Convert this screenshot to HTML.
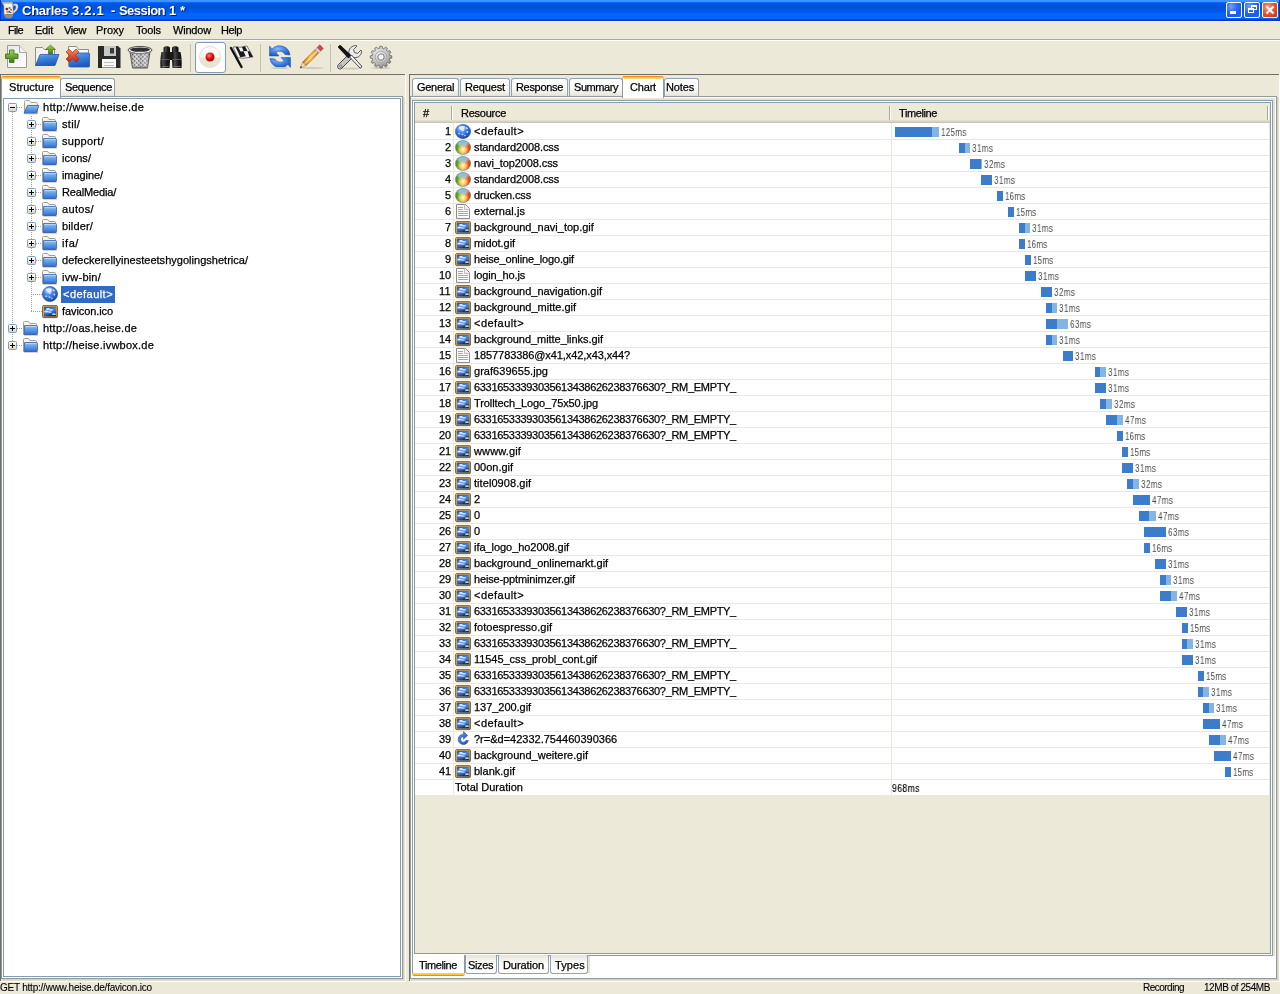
<!DOCTYPE html><html><head><meta charset="utf-8"><style>
*{box-sizing:border-box;margin:0;padding:0}
html,body{width:1280px;height:994px;overflow:hidden;background:#ece9d8;font-family:"Liberation Sans",sans-serif;font-size:11px;color:#000;position:relative}
.a{position:absolute}
.t{position:absolute;white-space:nowrap;line-height:16px;will-change:transform;-webkit-text-stroke:0.25px currentColor}
svg{position:absolute;overflow:visible}
</style></head><body>
<div class="a" style="left:0;top:0;width:1280px;height:21px;background:linear-gradient(#3f97ff 0px,#3f97ff 1px,#3990ff 1px,#3990ff 2px,#0a66f4 2px,#0a66f4 3px,#0058e8 3px,#0058e8 4px,#0055e2 4px,#0055e2 5px,#0053dd 5px,#0053dd 6px,#0052dc 6px,#0052dc 7px,#0052dc 7px,#0052dc 8px,#0053dd 8px,#0053dd 9px,#0056e4 9px,#0056e4 10px,#0058e8 10px,#0058e8 11px,#0059ea 11px,#0059ea 12px,#005cee 12px,#005cee 13px,#0064f8 13px,#0064f8 14px,#0066fb 14px,#0066fb 15px,#0066fb 15px,#0066fb 16px,#0066fb 16px,#0066fb 17px,#0066fb 17px,#0066fb 18px,#0062f6 18px,#0062f6 19px,#0046d8 19px,#0046d8 20px,#0032c4 20px,#0032c4 21px)"></div>
<div class="a" style="left:0px;top:0px;width:1px;height:21px;background:#0030b0;"></div>
<div class="a" style="left:1279px;top:0px;width:1px;height:21px;background:#0030b0;"></div>
<div class="t" style="left:23px;top:4px;font-size:13px;letter-spacing:-0.24px;color:#0a1a6a;font-weight:bold;margin-left:0.0px;-webkit-text-stroke:0;">Charles</div>
<div class="t" style="left:22px;top:3px;font-size:13px;letter-spacing:-0.24px;color:#fff;font-weight:bold;margin-left:0.0px;-webkit-text-stroke:0;">Charles</div>
<div class="t" style="left:73px;top:4px;font-size:13px;letter-spacing:0.72px;color:#0a1a6a;font-weight:bold;margin-left:0.0px;-webkit-text-stroke:0;">3.2.1</div>
<div class="t" style="left:72px;top:3px;font-size:13px;letter-spacing:0.72px;color:#fff;font-weight:bold;margin-left:0.0px;-webkit-text-stroke:0;">3.2.1</div>
<div class="t" style="left:112px;top:4px;font-size:13px;letter-spacing:1.67px;color:#0a1a6a;font-weight:bold;margin-left:0.0px;-webkit-text-stroke:0;">-</div>
<div class="t" style="left:111px;top:3px;font-size:13px;letter-spacing:1.67px;color:#fff;font-weight:bold;margin-left:0.0px;-webkit-text-stroke:0;">-</div>
<div class="t" style="left:119px;top:4px;font-size:13px;letter-spacing:-0.55px;color:#0a1a6a;font-weight:bold;margin-left:0.5px;-webkit-text-stroke:0;">Session</div>
<div class="t" style="left:118px;top:3px;font-size:13px;letter-spacing:-0.55px;color:#fff;font-weight:bold;margin-left:0.5px;-webkit-text-stroke:0;">Session</div>
<div class="t" style="left:170px;top:4px;font-size:13px;letter-spacing:-0.23px;color:#0a1a6a;font-weight:bold;margin-left:0.0px;-webkit-text-stroke:0;">1</div>
<div class="t" style="left:169px;top:3px;font-size:13px;letter-spacing:-0.23px;color:#fff;font-weight:bold;margin-left:0.0px;-webkit-text-stroke:0;">1</div>
<div class="t" style="left:180px;top:4px;font-size:13px;letter-spacing:1.94px;color:#0a1a6a;font-weight:bold;margin-left:0.5px;-webkit-text-stroke:0;">*</div>
<div class="t" style="left:179px;top:3px;font-size:13px;letter-spacing:1.94px;color:#fff;font-weight:bold;margin-left:0.5px;-webkit-text-stroke:0;">*</div>
<svg style="left:0;top:0" width="24" height="21" viewBox="0 0 24 21">
<path d="M13 4.5 C16.5 2.5 18.5 4.5 18 7.5 C17.5 10.5 15 12.5 12.5 13.5 L12.5 11.5 C14.5 10.5 16 9 16 7 C16 5.5 14.5 5 13 6 Z" fill="#f0ece0" stroke="#a09888" stroke-width="0.6"/>
<path d="M2 2.5 L12.5 2.5 L12.5 4 C13 6 13 9 13 12 C13 16 11.5 18 8.5 18 C5.5 18 4 16 4 12 L4 6 C3.5 4.5 2.5 3.5 2 2.5 Z" fill="#f4f2ea" stroke="#a8a090" stroke-width="0.6"/>
<rect x="3" y="2.5" width="9.5" height="1.5" fill="#b8c4c8"/>
<path d="M4 14 C4 17 5.5 18 8.5 18 C11.5 18 13 17 13 14 Z" fill="#988878"/>
<circle cx="6.8" cy="9" r="1.3" fill="#503030"/><circle cx="9.5" cy="8" r="1.1" fill="#e83838"/><circle cx="11" cy="9.8" r="1" fill="#38a838"/><circle cx="7.5" cy="12" r="1.4" fill="#f0a000"/><circle cx="9.3" cy="11.8" r="1" fill="#2858d0"/><circle cx="10.8" cy="12.5" r="0.8" fill="#7040a0"/>
</svg>
<div class="a" style="left:1226px;top:2px;width:16px;height:16px;border:1px solid #fff;border-radius:2px;background:radial-gradient(circle at 30% 25%,#6fa0ff 0,#2d6cf0 40%,#1a58e8 70%,#2a70f8 100%)"></div><div class="a" style="left:1230px;top:11px;width:6px;height:3px;background:#fff;"></div>
<div class="a" style="left:1244px;top:2px;width:16px;height:16px;border:1px solid #fff;border-radius:2px;background:radial-gradient(circle at 30% 25%,#6fa0ff 0,#2d6cf0 40%,#1a58e8 70%,#2a70f8 100%)"></div><div class="a" style="left:1251px;top:5px;width:6px;height:5px;border:1px solid #fff;border-top-width:2px"></div><div class="a" style="left:1248px;top:8px;width:6px;height:5px;border:1px solid #fff;border-top-width:2px;background:#2a66ee"></div>
<div class="a" style="left:1262px;top:2px;width:16px;height:16px;border:1px solid #fff;border-radius:2px;background:radial-gradient(circle at 35% 30%,#f4a080 0,#e8603c 40%,#d4441c 75%,#b83410 100%)"></div><svg style="left:1262px;top:2px" width="16" height="16" viewBox="0 0 16 16"><path d="M4.5 4.5 L11.5 11.5 M11.5 4.5 L4.5 11.5" stroke="#fff" stroke-width="2.2"/></svg>
<div class="a" style="left:0px;top:21px;width:1280px;height:1px;background:#fbf5de;"></div>
<div class="t" style="left:8px;top:22px;letter-spacing:-0.68px;">File</div>
<div class="t" style="left:35px;top:22px;letter-spacing:-0.24px;">Edit</div>
<div class="t" style="left:64px;top:22px;letter-spacing:-0.41px;">View</div>
<div class="t" style="left:96px;top:22px;letter-spacing:-0.02px;">Proxy</div>
<div class="t" style="left:136px;top:22px;letter-spacing:-0.14px;">Tools</div>
<div class="t" style="left:173px;top:22px;letter-spacing:-0.19px;">Window</div>
<div class="t" style="left:221px;top:22px;letter-spacing:-0.41px;">Help</div>
<div class="a" style="left:0px;top:39px;width:1280px;height:1px;background:#aca899;"></div>
<div class="a" style="left:0px;top:40px;width:1280px;height:1px;background:#fff;"></div>
<svg style="left:0;top:41px" width="400" height="33" viewBox="0 41 400 33">
<defs>
<linearGradient id="gGreen" x1="0" y1="0" x2="0" y2="1"><stop offset="0" stop-color="#a8d070"/><stop offset="0.5" stop-color="#6aa832"/><stop offset="1" stop-color="#3e7a14"/></linearGradient>
<linearGradient id="gBlueF" x1="0" y1="0" x2="0.3" y2="1"><stop offset="0" stop-color="#8cc0f4"/><stop offset="0.25" stop-color="#4a90e2"/><stop offset="1" stop-color="#1c5cc0"/></linearGradient>
<linearGradient id="gPage" x1="0" y1="0" x2="1" y2="1"><stop offset="0" stop-color="#e8e8e8"/><stop offset="1" stop-color="#ffffff"/></linearGradient>
<linearGradient id="gRed" x1="0" y1="0" x2="0" y2="1"><stop offset="0" stop-color="#f48860"/><stop offset="1" stop-color="#c82808"/></linearGradient>
<radialGradient id="gRefresh" cx="0.4" cy="0.3" r="0.8"><stop offset="0" stop-color="#8ab8f8"/><stop offset="0.5" stop-color="#3a7ee0"/><stop offset="1" stop-color="#1a4cb0"/></radialGradient>
<radialGradient id="gGear" cx="0.4" cy="0.35" r="0.7"><stop offset="0" stop-color="#f0f0f0"/><stop offset="0.6" stop-color="#c0c0c0"/><stop offset="1" stop-color="#808080"/></radialGradient>
<radialGradient id="gRec" cx="0.4" cy="0.35" r="0.7"><stop offset="0" stop-color="#ff8080"/><stop offset="0.5" stop-color="#e01010"/><stop offset="1" stop-color="#a00000"/></radialGradient>
<linearGradient id="gPencil" x1="0" y1="0" x2="1" y2="0"><stop offset="0" stop-color="#c86a10"/><stop offset="0.5" stop-color="#f8c050"/><stop offset="1" stop-color="#d88020"/></linearGradient>
</defs>
<!-- new -->
<path d="M7.5 45.5 L19.5 45.5 L26.5 52.5 L26.5 67.5 L7.5 67.5 Z" fill="url(#gPage)" stroke="#9a9a9a"/>
<path d="M19.5 45.5 L19.5 52.5 L26.5 52.5" fill="#f0f0f0" stroke="#a8a8a8"/>
<path d="M9.5 50 L14 50 L14 54 L18 54 L18 58.5 L14 58.5 L14 62.5 L9.5 62.5 L9.5 58.5 L5.5 58.5 L5.5 54 L9.5 54 Z" fill="url(#gGreen)" stroke="#3a6a10" stroke-width="0.8"/>
<!-- open -->
<path d="M35.5 47.5 L42.5 47.5 L44.5 49.5 L54.5 49.5 L54.5 65.5 L35.5 65.5 Z" fill="#f4f2ec" stroke="#909090"/>
<path d="M40 54.5 L59 54.5 L55 65.5 L35.5 65.5 Z" fill="url(#gBlueF)" stroke="#2458b0" stroke-width="0.8"/>
<path d="M50.5 45 L55.5 49.5 L52.5 49.5 L52.5 54 L48.5 54 L48.5 49.5 L45.5 49.5 Z" fill="url(#gGreen)" stroke="#3a6a10" stroke-width="0.6"/>
<!-- close -->
<path d="M68.5 46.5 L76.5 46.5 L78.5 49.5 L88.5 49.5 L88.5 66.5 L68.5 66.5 Z" fill="#f8f8f4" stroke="#909090"/>
<rect x="69.5" y="53" width="20" height="14" rx="1" fill="url(#gBlueF)" stroke="#2458b0" stroke-width="0.8"/>
<path d="M66 52 L69 49 L72.5 52.5 L76 49 L79 52 L75.5 55.5 L79 59 L76 62 L72.5 58.5 L69 62 L66 59 L69.5 55.5 Z" fill="url(#gRed)" stroke="#b01800" stroke-width="0.6"/>
<!-- save -->
<path d="M98 46 L118 46 L120.5 48.5 L120.5 68 L98 68 Z" fill="#2a2a2a"/>
<rect x="104" y="46" width="12" height="10" fill="#c8c8c4"/>
<rect x="110" y="48" width="4" height="5.5" fill="#3a3a3a"/>
<rect x="102" y="59" width="14" height="8.5" fill="#f8f8f4"/>
<rect x="104" y="62" width="10" height="0.8" fill="#a0b0c0"/><rect x="104" y="65" width="10" height="0.8" fill="#a0b0c0"/>
<!-- trash -->
<pattern id="mesh" x="0" y="0" width="2.9" height="2.9" patternUnits="userSpaceOnUse" patternTransform="rotate(45 140 60)"><rect width="2.9" height="2.9" fill="#d0d0d0"/><rect x="0" y="0" width="1.6" height="1.6" fill="#303030"/><path d="M0 1.6 L3.2 1.6 M1.6 0 L1.6 3.2" stroke="#f4f4f4" stroke-width="0.5"/></pattern>
<linearGradient id="trshade" x1="0" y1="0" x2="1" y2="0"><stop offset="0" stop-color="#000" stop-opacity="0.35"/><stop offset="0.35" stop-color="#fff" stop-opacity="0.1"/><stop offset="0.5" stop-color="#000" stop-opacity="0.1"/><stop offset="0.75" stop-color="#fff" stop-opacity="0.15"/><stop offset="1" stop-color="#000" stop-opacity="0.4"/></linearGradient>
<path d="M130 52 L150 52 L147.5 68 L132.5 68 Z" fill="url(#mesh)" stroke="#505050" stroke-width="0.8"/>
<path d="M130 52 L150 52 L147.5 68 L132.5 68 Z" fill="url(#trshade)"/>
<path d="M132.5 67.5 L147.5 67.5" stroke="#707070" stroke-width="1.5"/>
<ellipse cx="140" cy="50" rx="12" ry="3.6" fill="#e8e8e8" stroke="#404040" stroke-width="0.9"/>
<ellipse cx="140" cy="49.6" rx="10" ry="2.2" fill="#303030"/>
<path d="M129 51.5 C133 54.5 147 54.5 151 51.5" stroke="#909090" stroke-width="1.2" fill="none"/>
<!-- binoculars -->
<linearGradient id="bin" x1="0" y1="0" x2="1" y2="0"><stop offset="0" stop-color="#101010"/><stop offset="0.3" stop-color="#4a4a4a"/><stop offset="0.6" stop-color="#202020"/><stop offset="1" stop-color="#0a0a0a"/></linearGradient>
<path d="M163.5 52 L163.5 48 C163.5 45.5 170 45.5 170 48 L170 52 Z" fill="url(#bin)"/>
<path d="M172 52 L172 48 C172 45.5 178.5 45.5 178.5 48 L178.5 52 Z" fill="url(#bin)"/>
<path d="M161.5 52 L170 52 L170 60 L169.5 68 L160.5 68 C160 64 160.5 56 161.5 52 Z" fill="url(#bin)"/>
<path d="M172 52 L180.5 52 C181.5 56 182 64 181.5 68 L172.5 68 L172 60 Z" fill="url(#bin)"/>
<rect x="168.5" y="52" width="5" height="8" fill="#181818"/>
<path d="M161 59.5 L169.5 59.5 M172.5 59.5 L181 59.5" stroke="#6a6a6a" stroke-width="0.8"/>
<path d="M162 66.5 L168.5 66.5 M173.5 66.5 L180.5 66.5" stroke="#808080" stroke-width="0.8"/>
<!-- separators -->
<rect x="190" y="44" width="1" height="28" fill="#c5c2b2"/>
<rect x="260" y="44" width="1" height="28" fill="#c5c2b2"/>
<rect x="330" y="44" width="1" height="28" fill="#c5c2b2"/>
<!-- record button -->
<rect x="195.5" y="42.5" width="30" height="30" rx="2.5" fill="#fdfdfb" stroke="#7f9db9"/>
<circle cx="210" cy="57" r="10.5" fill="#fafaf8" stroke="#ddd8cc" stroke-width="0.8"/>
<path d="M199.5 57.5 A10.5 10.5 0 0 0 220.5 57.5 Z" fill="#e8e4d6"/>
<circle cx="210" cy="57" r="4.5" fill="url(#gRec)"/>
<!-- flag -->
<path d="M231 48 L241.5 67" stroke="#101010" stroke-width="2.4" stroke-linecap="round"/>
<path d="M233 47 C236 46 239 48 242 47 C245 46 247 46 247 46 L253 57 C250 57 248 58 245 58 C242 59 240 57 238 58 Z" fill="#f4f4f4" stroke="#303030" stroke-width="0.6"/>
<path d="M235.5 47 L238 46.8 L240.5 51.5 L238 52 Z M240.5 51.5 L243.5 51.2 L245.8 56.2 L243 56.8 Z M242 47 L245 46.2 L247.5 51 L243.5 51.2 Z M238 52 L240.5 51.5 L243 56.8 L240.3 57.3 Z M247.5 51 L250 51.5 L252.8 56.8 L249.5 57.2 Z" fill="#1a1a1a"/>
<!-- refresh -->
<path d="M290 55 A10.5 10.5 0 0 0 272 49 L269.5 46 L269.5 56 L279 56 L276 52.5 A6 6 0 0 1 285 54.5 Z" fill="url(#gRefresh)" stroke="#1a4aa8" stroke-width="0.5"/>
<path d="M270 58.5 A10.5 10.5 0 0 0 288 64.5 L290.5 67.5 L290.5 57.5 L281 57.5 L284 61 A6 6 0 0 1 275 59 Z" fill="url(#gRefresh)" stroke="#1a4aa8" stroke-width="0.5"/>
<ellipse cx="280" cy="68" rx="9" ry="1" fill="#d0ccbc"/>
<!-- pencil -->
<ellipse cx="312" cy="68" rx="12" ry="0.9" fill="#cfcbbb"/>
<path d="M306.01 65.73 L318.74 53.00 L315.20 49.46 L302.47 62.19 Z" fill="url(#gPencil)" stroke="#a85808" stroke-width="0.6"/>
<path d="M304.60 63.60 L316.97 51.23" stroke="#fce090" stroke-width="1.2"/>
<path d="M300.00 68.20 L306.01 65.73 L302.47 62.19 Z" fill="#f0d8a8" stroke="#a08050" stroke-width="0.5"/>
<path d="M300.00 68.20 L302.23 67.32 L300.88 65.97 Z" fill="#303030"/>
<path d="M318.74 53.00 L320.72 51.02 L317.18 47.48 L315.20 49.46 Z" fill="#d8d8d8" stroke="#808080" stroke-width="0.5"/>
<path d="M320.72 51.02 L323.33 48.40 L319.80 44.87 L317.18 47.48 Z" fill="#d04848" stroke="#a03030" stroke-width="0.5"/>
<!-- tools -->
<ellipse cx="350" cy="68.5" rx="11" ry="0.9" fill="#cfcbbb"/>
<path d="M338.5 68.5 C337 67 337.5 65.5 338.5 64.5 L350 53 L353.5 56.5 L342 68 C341 69 339.5 69.5 338.5 68.5 Z" fill="#c4c4c4" stroke="#3a3a3a" stroke-width="0.9"/>
<circle cx="340.8" cy="66.2" r="1.1" fill="#fff" stroke="#3a3a3a" stroke-width="0.6"/>
<path d="M349.5 55.5 C347.5 51 350 46 355.5 45.5 L357 46 L353.5 49.5 L354.5 52.5 L357.5 53.5 L361 50 L361.5 51.5 C361.5 56 357 58.5 352.5 57.5 Z" fill="#ececec" stroke="#4a4a4a" stroke-width="0.9"/>
<path d="M338.5 47.5 C338 46.5 339.5 45 340.5 45.5 L351 55.5 L348.5 58 Z" fill="#121212" stroke="#000" stroke-width="0.8"/>
<path d="M349.5 57 L351.5 55 L361.5 66 C362 67 361 68.5 360 68 Z" fill="#fafafa" stroke="#2a2a2a" stroke-width="0.9"/>
<!-- gear -->
<ellipse cx="381" cy="68" rx="10" ry="1.2" fill="#d0ccbc"/>
<g transform="translate(381 57)">
<path d="M-1.64 -8.44 L-1.13 -10.74 L1.13 -10.74 L1.64 -8.44 L2.80 -8.13 L4.39 -9.87 L6.35 -8.74 L5.64 -6.49 L6.49 -5.64 L8.74 -6.35 L9.87 -4.39 L8.13 -2.80 L8.44 -1.64 L10.74 -1.13 L10.74 1.13 L8.44 1.64 L8.13 2.80 L9.87 4.39 L8.74 6.35 L6.49 5.64 L5.64 6.49 L6.35 8.74 L4.39 9.87 L2.80 8.13 L1.64 8.44 L1.13 10.74 L-1.13 10.74 L-1.64 8.44 L-2.80 8.13 L-4.39 9.87 L-6.35 8.74 L-5.64 6.49 L-6.49 5.64 L-8.74 6.35 L-9.87 4.39 L-8.13 2.80 L-8.44 1.64 L-10.74 1.13 L-10.74 -1.13 L-8.44 -1.64 L-8.13 -2.80 L-9.87 -4.39 L-8.74 -6.35 L-6.49 -5.64 L-5.64 -6.49 L-6.35 -8.74 L-4.39 -9.87 L-2.80 -8.13 Z" fill="url(#gGear)" stroke="#6a6a6a" stroke-width="0.8"/>
<circle cx="0" cy="0" r="5.8" fill="none" stroke="#a8a8a8" stroke-width="1"/>
<circle cx="0" cy="0" r="3.2" fill="#f4f4f0" stroke="#707070" stroke-width="0.9"/>
</g>
</svg>
<svg width="0" height="0" style="left:0;top:0;position:absolute">
<defs>
<linearGradient id="fBlue" x1="0" y1="0" x2="0" y2="1"><stop offset="0" stop-color="#9cc4f4"/><stop offset="0.35" stop-color="#6aa4e8"/><stop offset="0.85" stop-color="#3e7cd8"/><stop offset="1" stop-color="#2a5cc0"/></linearGradient>
<linearGradient id="fBack" x1="0" y1="0" x2="0" y2="1"><stop offset="0" stop-color="#fbfaf4"/><stop offset="1" stop-color="#dcd6c0"/></linearGradient>
<radialGradient id="glob" cx="0.4" cy="0.3" r="0.75"><stop offset="0" stop-color="#a8d0ff"/><stop offset="0.45" stop-color="#3c7ee0"/><stop offset="1" stop-color="#1444a8"/></radialGradient>
<radialGradient id="cssY" cx="0.5" cy="0.62" r="0.5"><stop offset="0" stop-color="#fff4c0"/><stop offset="0.5" stop-color="#f8c040" stop-opacity="0.8"/><stop offset="1" stop-color="#f8c040" stop-opacity="0"/></radialGradient>
<linearGradient id="imgSky" x1="0" y1="0" x2="0.4" y2="1"><stop offset="0" stop-color="#1a50b8"/><stop offset="0.5" stop-color="#4a8ae0"/><stop offset="0.75" stop-color="#2a68c8"/><stop offset="1" stop-color="#0a2a80"/></linearGradient><linearGradient id="cssLR" x1="0" y1="0" x2="1" y2="0"><stop offset="0" stop-color="#3a9018"/><stop offset="0.3" stop-color="#80b840"/><stop offset="0.5" stop-color="#e8d090"/><stop offset="0.7" stop-color="#f07040"/><stop offset="1" stop-color="#d83000"/></linearGradient><radialGradient id="cssTop" cx="0.5" cy="0.05" r="0.5"><stop offset="0" stop-color="#78c0e0"/><stop offset="0.6" stop-color="#90c8e0" stop-opacity="0.9"/><stop offset="1" stop-color="#90c8e0" stop-opacity="0"/></radialGradient><radialGradient id="cssBot" cx="0.5" cy="0.65" r="0.4"><stop offset="0" stop-color="#fffce8"/><stop offset="0.5" stop-color="#f8d870" stop-opacity="0.8"/><stop offset="1" stop-color="#f0b040" stop-opacity="0"/></radialGradient>
<linearGradient id="frame" x1="0" y1="0" x2="1" y2="1"><stop offset="0" stop-color="#d8a048"/><stop offset="0.5" stop-color="#c08030"/><stop offset="1" stop-color="#9a5a18"/></linearGradient>
<linearGradient id="boxG" x1="0" y1="0" x2="0" y2="1"><stop offset="0" stop-color="#ffffff"/><stop offset="1" stop-color="#d8d4c4"/></linearGradient>
<symbol id="i-fold" viewBox="0 0 16 16">
<rect x="1" y="14.6" width="14" height="1.2" fill="#cdc9bc"/>
<path d="M0.5 14.5 L0.5 2.5 Q0.5 1.5 1.5 1.5 L5.5 1.5 L7 3.5 L12.5 3.5 Q13.5 3.5 13.5 4.5 L13.5 14.5 Z" fill="url(#fBack)" stroke="#a09c90"/>
<path d="M1.5 5.5 L13.5 5.5 Q14.5 5.5 14.5 6.5 L14.5 13.5 Q14.5 14.5 13.5 14.5 L1.5 14.5 Z" fill="url(#fBlue)" stroke="#2e62b8" stroke-width="0.8"/>
<path d="M2.5 6.6 L13.5 6.6" stroke="#c0dcfa" stroke-width="0.8"/>
</symbol>
<symbol id="i-open" viewBox="0 0 16 16">
<path d="M1.5 2.5 Q1.5 1.5 2.5 1.5 L6.5 1.5 L8 3.5 L13.5 3.5 Q14.5 3.5 14.5 4.5 L14.5 14.5 L1.5 14.5 Z" fill="url(#fBack)" stroke="#a8a49a"/>
<path d="M4.5 6.5 L16 6.5 L13 14.5 L1 14.5 Z" fill="url(#fBlue)" stroke="#2a5cb8" stroke-width="0.8"/>
<rect x="1" y="14.5" width="13" height="1" fill="#d8d4c4"/>
</symbol>
<symbol id="i-glob" viewBox="0 0 16 16" preserveAspectRatio="none">
<circle cx="8" cy="8" r="7.6" fill="url(#glob)" stroke="#1a48a8" stroke-width="0.6"/>
<path d="M4 3 L7 2.2 L9.5 2.5 L10 4 L8.5 5.5 L9 7.5 L7.5 8 L6.5 6 L5 5.5 Z M11 3 L13 4.5 L12.5 5.5 L11 5 Z M11.5 7.5 L13.3 7.8 L13 9.5 L11.5 9.2 Z M3 9.5 L5 9.8 L5.5 10.8 L3.5 11 Z M6.5 10.2 L8.5 10.5 L8.2 12 L6.8 11.8 Z M9.5 11.5 L11 12 L10 13 L9 12.8 Z" fill="#e4f0ff" opacity="0.85"/>
<ellipse cx="7" cy="4.5" rx="4" ry="2.4" fill="#ffffff" opacity="0.25"/>
</symbol>
<symbol id="i-css" viewBox="0 0 16 16" preserveAspectRatio="none">
<circle cx="8" cy="8" r="7.6" fill="url(#cssLR)"/>
<circle cx="8" cy="8" r="7.6" fill="url(#cssTop)"/>
<circle cx="8" cy="8" r="7.6" fill="url(#cssBot)"/>
<circle cx="8" cy="8" r="7.6" fill="none" stroke="#6a7060" stroke-width="0.6" opacity="0.8"/>
</symbol>
<symbol id="i-doc" viewBox="0 0 16 16" preserveAspectRatio="none">
<path d="M1.5 1.5 L10.5 1.5 L14.5 5.5 L14.5 15.5 L1.5 15.5 Z" fill="#fdfdfd" stroke="#8a8a8a"/>
<path d="M9.5 1.5 L9.5 6.5 L14.5 6.5" fill="none" stroke="#c0c0c0"/>
<path d="M10 2 L10 6 L14 6 Z" fill="#ececec"/>
<path d="M3 4.5 L8 4.5 M3 6.5 L8 6.5 M3 8.5 L13 8.5 M3 10.5 L13 10.5 M3 12.5 L13 12.5" stroke="#a0a8b4" stroke-width="1"/>
</symbol>
<symbol id="i-img" viewBox="0 0 16 16" preserveAspectRatio="none">
<rect x="0.5" y="0.5" width="15" height="14" rx="1.5" fill="url(#frame)" stroke="#7a4a10" stroke-width="0.8"/>
<rect x="1.6" y="1.6" width="12.8" height="11.8" fill="none" stroke="#f0c070" stroke-width="0.5" opacity="0.7"/>
<rect x="2" y="2" width="12" height="11" fill="url(#imgSky)"/>
<ellipse cx="6" cy="4.5" rx="2" ry="1.2" fill="#fff" opacity="0.85"/>
<ellipse cx="9" cy="5.5" rx="2.2" ry="1" fill="#e8f4ff" opacity="0.8"/>
<ellipse cx="4.5" cy="7.5" rx="2.3" ry="1.2" fill="#f4faff" opacity="0.85"/>
<ellipse cx="8" cy="8" rx="2" ry="1" fill="#d8ecff" opacity="0.7"/>
<ellipse cx="12" cy="10.5" rx="2" ry="1" fill="#fff" opacity="0.75"/>
<path d="M8 12.5 L11 12 L12 13 L8 13 Z" fill="#2a8a40" opacity="0.6"/>
</symbol>
<symbol id="i-ref" viewBox="0 0 16 16">
<linearGradient id="refG" x1="0" y1="0" x2="1" y2="1"><stop offset="0" stop-color="#5a9ae8"/><stop offset="1" stop-color="#1a4cb8"/></linearGradient>
<path d="M8.5 3.2 A5.2 5.2 0 1 0 13.4 9.5 L10.8 9.5 A2.7 2.7 0 1 1 8.5 5.7 L8.5 8.3 L12.6 4.4 L8.5 0.6 Z" fill="url(#refG)" stroke="#1a48a0" stroke-width="0.5"/>
</symbol>
<symbol id="i-min" viewBox="0 0 9 9">
<rect x="0.5" y="0.5" width="8" height="8" rx="1" fill="url(#boxG)" stroke="#7f9db9"/>
<rect x="2" y="4" width="5" height="1" fill="#000"/>
</symbol>
<symbol id="i-plus" viewBox="0 0 9 9">
<rect x="0.5" y="0.5" width="8" height="8" rx="1" fill="url(#boxG)" stroke="#7f9db9"/>
<rect x="2" y="4" width="5" height="1" fill="#000"/><rect x="4" y="2" width="1" height="5" fill="#000"/>
</symbol>
</defs></svg>
<div class="a" style="left:0px;top:74px;width:406px;height:1px;background:#716f64;"></div>
<div class="a" style="left:0px;top:74px;width:1px;height:907px;background:#716f64;"></div>
<div class="a" style="left:405px;top:74px;width:1px;height:908px;background:#fff;"></div>
<div class="a" style="left:0px;top:981px;width:406px;height:1px;background:#fff;"></div>
<div class="a" style="left:1px;top:96px;width:402px;height:883px;border:1px solid #919b9c;background:#fff"></div>
<div class="a" style="left:403px;top:97px;width:1px;height:883px;background:#d6d2c2;"></div>
<div class="a" style="left:404px;top:98px;width:1px;height:882px;background:#e2dfd0;"></div>
<div class="a" style="left:2px;top:979px;width:402px;height:1px;background:#d6d2c2;"></div>
<div class="a" style="left:3px;top:980px;width:402px;height:1px;background:#e2dfd0;"></div>
<div class="a" style="left:3px;top:98px;width:398px;height:879px;border:1px solid #7f9db9;background:#fff"></div>
<div class="a" style="left:60px;top:78px;width:55px;height:18px;background:linear-gradient(#ffffff 0%,#fcfcfa 50%,#f0efe8 80%,#e4e2d8 100%);border:1px solid #8fa3b5;border-bottom:none;border-radius:3px 3px 0 0"></div><div class="t" style="left:65px;top:79px;letter-spacing:-0.32px;">Sequence</div>
<div class="a" style="left:1px;top:76px;width:60px;height:22px;background:#fff;border-left:1px solid #919b9c;border-right:1px solid #919b9c;border-radius:3px 3px 0 0"></div><div class="a" style="left:1px;top:76px;width:60px;height:3px;background:linear-gradient(#e68b2c 0,#e68b2c 1px,#ffc73c 1px,#ffc73c 2px,#fcd46c 2px);border-radius:3px 3px 0 0"></div><div class="t" style="left:9px;top:79px;letter-spacing:0.04px;">Structure</div>
<div class="a" style="left:12px;top:112px;width:1px;height:232px;background:repeating-linear-gradient(#a0a0a0 0 1px,transparent 1px 2px)"></div>
<div class="a" style="left:31px;top:116px;width:1px;height:195px;background:repeating-linear-gradient(#a0a0a0 0 1px,transparent 1px 2px)"></div>
<div class="a" style="left:17px;top:107px;width:6px;height:1px;background:repeating-linear-gradient(90deg,#a0a0a0 0 1px,transparent 1px 2px)"></div>
<svg style="left:8px;top:103px" width="9" height="9"><use href="#i-min"/></svg>
<svg style="left:23px;top:99px" width="16" height="16"><use href="#i-open"/></svg>
<div class="t" style="left:43px;top:99px;letter-spacing:0.30px;">http://www.heise.de</div>
<div class="a" style="left:36px;top:124px;width:6px;height:1px;background:repeating-linear-gradient(90deg,#a0a0a0 0 1px,transparent 1px 2px)"></div>
<svg style="left:27px;top:120px" width="9" height="9"><use href="#i-plus"/></svg>
<svg style="left:42px;top:116px" width="16" height="16"><use href="#i-fold"/></svg>
<div class="t" style="left:62px;top:116px;letter-spacing:0.30px;">stil/</div>
<div class="a" style="left:36px;top:141px;width:6px;height:1px;background:repeating-linear-gradient(90deg,#a0a0a0 0 1px,transparent 1px 2px)"></div>
<svg style="left:27px;top:137px" width="9" height="9"><use href="#i-plus"/></svg>
<svg style="left:42px;top:133px" width="16" height="16"><use href="#i-fold"/></svg>
<div class="t" style="left:62px;top:133px;letter-spacing:0.28px;">support/</div>
<div class="a" style="left:36px;top:158px;width:6px;height:1px;background:repeating-linear-gradient(90deg,#a0a0a0 0 1px,transparent 1px 2px)"></div>
<svg style="left:27px;top:154px" width="9" height="9"><use href="#i-plus"/></svg>
<svg style="left:42px;top:150px" width="16" height="16"><use href="#i-fold"/></svg>
<div class="t" style="left:62px;top:150px;letter-spacing:0.04px;">icons/</div>
<div class="a" style="left:36px;top:175px;width:6px;height:1px;background:repeating-linear-gradient(90deg,#a0a0a0 0 1px,transparent 1px 2px)"></div>
<svg style="left:27px;top:171px" width="9" height="9"><use href="#i-plus"/></svg>
<svg style="left:42px;top:167px" width="16" height="16"><use href="#i-fold"/></svg>
<div class="t" style="left:62px;top:167px;letter-spacing:-0.07px;">imagine/</div>
<div class="a" style="left:36px;top:192px;width:6px;height:1px;background:repeating-linear-gradient(90deg,#a0a0a0 0 1px,transparent 1px 2px)"></div>
<svg style="left:27px;top:188px" width="9" height="9"><use href="#i-plus"/></svg>
<svg style="left:42px;top:184px" width="16" height="16"><use href="#i-fold"/></svg>
<div class="t" style="left:62px;top:184px;letter-spacing:-0.16px;">RealMedia/</div>
<div class="a" style="left:36px;top:209px;width:6px;height:1px;background:repeating-linear-gradient(90deg,#a0a0a0 0 1px,transparent 1px 2px)"></div>
<svg style="left:27px;top:205px" width="9" height="9"><use href="#i-plus"/></svg>
<svg style="left:42px;top:201px" width="16" height="16"><use href="#i-fold"/></svg>
<div class="t" style="left:62px;top:201px;letter-spacing:0.34px;">autos/</div>
<div class="a" style="left:36px;top:226px;width:6px;height:1px;background:repeating-linear-gradient(90deg,#a0a0a0 0 1px,transparent 1px 2px)"></div>
<svg style="left:27px;top:222px" width="9" height="9"><use href="#i-plus"/></svg>
<svg style="left:42px;top:218px" width="16" height="16"><use href="#i-fold"/></svg>
<div class="t" style="left:62px;top:218px;letter-spacing:0.15px;">bilder/</div>
<div class="a" style="left:36px;top:243px;width:6px;height:1px;background:repeating-linear-gradient(90deg,#a0a0a0 0 1px,transparent 1px 2px)"></div>
<svg style="left:27px;top:239px" width="9" height="9"><use href="#i-plus"/></svg>
<svg style="left:42px;top:235px" width="16" height="16"><use href="#i-fold"/></svg>
<div class="t" style="left:62px;top:235px;letter-spacing:0.58px;">ifa/</div>
<div class="a" style="left:36px;top:260px;width:6px;height:1px;background:repeating-linear-gradient(90deg,#a0a0a0 0 1px,transparent 1px 2px)"></div>
<svg style="left:27px;top:256px" width="9" height="9"><use href="#i-plus"/></svg>
<svg style="left:42px;top:252px" width="16" height="16"><use href="#i-fold"/></svg>
<div class="t" style="left:62px;top:252px;letter-spacing:0.02px;">defeckerellyinesteetshygolingshetrica/</div>
<div class="a" style="left:36px;top:277px;width:6px;height:1px;background:repeating-linear-gradient(90deg,#a0a0a0 0 1px,transparent 1px 2px)"></div>
<svg style="left:27px;top:273px" width="9" height="9"><use href="#i-plus"/></svg>
<svg style="left:42px;top:269px" width="16" height="16"><use href="#i-fold"/></svg>
<div class="t" style="left:62px;top:269px;letter-spacing:0.21px;">ivw-bin/</div>
<div class="a" style="left:31px;top:294px;width:11px;height:1px;background:repeating-linear-gradient(90deg,#a0a0a0 0 1px,transparent 1px 2px)"></div>
<svg style="left:42px;top:286px" width="16" height="16"><use href="#i-glob"/></svg>
<div class="a" style="left:61px;top:286px;width:54px;height:17px;background:#316ac5;"></div>
<div class="t" style="left:63px;top:286px;letter-spacing:0.46px;color:#fff;">&lt;default&gt;</div>
<div class="a" style="left:31px;top:311px;width:11px;height:1px;background:repeating-linear-gradient(90deg,#a0a0a0 0 1px,transparent 1px 2px)"></div>
<svg style="left:42px;top:305px" width="16" height="14"><use href="#i-img"/></svg>
<div class="t" style="left:62px;top:303px;letter-spacing:-0.09px;">favicon.ico</div>
<div class="a" style="left:17px;top:328px;width:6px;height:1px;background:repeating-linear-gradient(90deg,#a0a0a0 0 1px,transparent 1px 2px)"></div>
<svg style="left:8px;top:324px" width="9" height="9"><use href="#i-plus"/></svg>
<svg style="left:23px;top:320px" width="16" height="16"><use href="#i-fold"/></svg>
<div class="t" style="left:43px;top:320px;letter-spacing:0.22px;">http://oas.heise.de</div>
<div class="a" style="left:17px;top:345px;width:6px;height:1px;background:repeating-linear-gradient(90deg,#a0a0a0 0 1px,transparent 1px 2px)"></div>
<svg style="left:8px;top:341px" width="9" height="9"><use href="#i-plus"/></svg>
<svg style="left:23px;top:337px" width="16" height="16"><use href="#i-fold"/></svg>
<div class="t" style="left:43px;top:337px;letter-spacing:0.24px;">http://heise.ivwbox.de</div>
<div class="a" style="left:409px;top:74px;width:870px;height:1px;background:#716f64;"></div>
<div class="a" style="left:409px;top:74px;width:1px;height:907px;background:#716f64;"></div>
<div class="a" style="left:1279px;top:74px;width:1px;height:908px;background:#fff;"></div>
<div class="a" style="left:409px;top:981px;width:871px;height:1px;background:#fff;"></div>
<div class="a" style="left:410px;top:96px;width:867px;height:883px;border:1px solid #919b9c;background:#fff"></div>
<div class="a" style="left:1277px;top:97px;width:1px;height:883px;background:#d6d2c2;"></div>
<div class="a" style="left:1278px;top:98px;width:1px;height:882px;background:#e2dfd0;"></div>
<div class="a" style="left:411px;top:979px;width:867px;height:1px;background:#d6d2c2;"></div>
<div class="a" style="left:412px;top:980px;width:867px;height:1px;background:#e2dfd0;"></div>
<div class="a" style="left:411px;top:98px;width:864px;height:2px;background:#e6e3d4;"></div>
<div class="a" style="left:1273px;top:98px;width:2px;height:858px;background:#e6e3d4;"></div>
<div class="a" style="left:412px;top:100px;width:861px;height:856px;border:1px solid #919b9c;background:#fff"></div>
<div class="a" style="left:414px;top:102px;width:857px;height:852px;border:1px solid #7f9db9;background:#ece9d8"></div>
<div class="a" style="left:412px;top:78px;width:47px;height:18px;background:linear-gradient(#ffffff 0%,#fcfcfa 50%,#f0efe8 80%,#e4e2d8 100%);border:1px solid #8fa3b5;border-bottom:none;border-radius:3px 3px 0 0"></div><div class="t" style="left:417px;top:79px;letter-spacing:-0.30px;">General</div>
<div class="a" style="left:460px;top:78px;width:50px;height:18px;background:linear-gradient(#ffffff 0%,#fcfcfa 50%,#f0efe8 80%,#e4e2d8 100%);border:1px solid #8fa3b5;border-bottom:none;border-radius:3px 3px 0 0"></div><div class="t" style="left:465px;top:79px;letter-spacing:-0.14px;">Request</div>
<div class="a" style="left:511px;top:78px;width:57px;height:18px;background:linear-gradient(#ffffff 0%,#fcfcfa 50%,#f0efe8 80%,#e4e2d8 100%);border:1px solid #8fa3b5;border-bottom:none;border-radius:3px 3px 0 0"></div><div class="t" style="left:516px;top:79px;letter-spacing:-0.32px;">Response</div>
<div class="a" style="left:569px;top:78px;width:54px;height:18px;background:linear-gradient(#ffffff 0%,#fcfcfa 50%,#f0efe8 80%,#e4e2d8 100%);border:1px solid #8fa3b5;border-bottom:none;border-radius:3px 3px 0 0"></div><div class="t" style="left:574px;top:79px;letter-spacing:-0.44px;">Summary</div>
<div class="a" style="left:664px;top:78px;width:35px;height:18px;background:linear-gradient(#ffffff 0%,#fcfcfa 50%,#f0efe8 80%,#e4e2d8 100%);border:1px solid #8fa3b5;border-bottom:none;border-radius:3px 3px 0 0"></div><div class="t" style="left:666px;top:79px;letter-spacing:-0.15px;">Notes</div>
<div class="a" style="left:622px;top:76px;width:42px;height:22px;background:#fff;border-left:1px solid #919b9c;border-right:1px solid #919b9c;border-radius:3px 3px 0 0"></div><div class="a" style="left:622px;top:76px;width:42px;height:3px;background:linear-gradient(#e68b2c 0,#e68b2c 1px,#ffc73c 1px,#ffc73c 2px,#fcd46c 2px);border-radius:3px 3px 0 0"></div><div class="t" style="left:630px;top:79px;letter-spacing:-0.18px;">Chart</div>
<div class="a" style="left:465px;top:955px;width:32px;height:19px;background:linear-gradient(#e4e2d8 0%,#f0efe8 20%,#fcfcfa 50%,#ffffff 100%);border:1px solid #8fa3b5;border-top:none;border-radius:0 0 3px 3px"></div><div class="t" style="left:468px;top:957px;letter-spacing:-0.38px;">Sizes</div>
<div class="a" style="left:498px;top:955px;width:51px;height:19px;background:linear-gradient(#e4e2d8 0%,#f0efe8 20%,#fcfcfa 50%,#ffffff 100%);border:1px solid #8fa3b5;border-top:none;border-radius:0 0 3px 3px"></div><div class="t" style="left:503px;top:957px;letter-spacing:-0.07px;">Duration</div>
<div class="a" style="left:550px;top:955px;width:38px;height:19px;background:linear-gradient(#e4e2d8 0%,#f0efe8 20%,#fcfcfa 50%,#ffffff 100%);border:1px solid #8fa3b5;border-top:none;border-radius:0 0 3px 3px"></div><div class="t" style="left:555px;top:957px;letter-spacing:0.13px;">Types</div>
<div class="a" style="left:588px;top:956px;width:2px;height:17px;background:#e6e3d4;"></div>
<div class="a" style="left:412px;top:955px;width:53px;height:21px;background:#fff;border-left:1px solid #919b9c;border-right:1px solid #919b9c;border-radius:0 0 3px 3px"></div><div class="a" style="left:412px;top:973px;width:53px;height:3px;background:linear-gradient(#fcd46c 0,#ffc73c 1px,#ffc73c 2px,#e68b2c 2px);border-radius:0 0 3px 3px"></div><div class="t" style="left:419px;top:957px;letter-spacing:-0.39px;">Timeline</div>
<div class="a" style="left:413px;top:955px;width:51px;height:1px;background:#fff;"></div>
<div class="a" style="left:415px;top:103px;width:855px;height:20px;background:linear-gradient(#ece9d8 0,#ece9d8 17px,#e2dece 17px,#e2dece 18px,#d6d2c2 18px,#d6d2c2 19px,#cbc7b7 19px)"></div>
<div class="a" style="left:451px;top:106px;width:1px;height:14px;background:#aca899;"></div>
<div class="a" style="left:452px;top:106px;width:1px;height:14px;background:#fff;"></div>
<div class="a" style="left:889px;top:106px;width:1px;height:14px;background:#aca899;"></div>
<div class="a" style="left:890px;top:106px;width:1px;height:14px;background:#fff;"></div>
<div class="a" style="left:1267px;top:106px;width:1px;height:14px;background:#aca899;"></div>
<div class="a" style="left:1268px;top:106px;width:1px;height:14px;background:#fff;"></div>
<div class="t" style="left:423px;top:105px;letter-spacing:0.88px;">#</div>
<div class="t" style="left:461px;top:105px;letter-spacing:-0.26px;">Resource</div>
<div class="t" style="left:899px;top:105px;letter-spacing:-0.39px;">Timeline</div>
<div class="a" style="left:415px;top:123px;width:855px;height:672px;background:#fff;"></div>
<div class="a" style="left:415px;top:139px;width:855px;height:1px;background:#ebe8d8;"></div>
<div class="a" style="left:415px;top:155px;width:855px;height:1px;background:#ebe8d8;"></div>
<div class="a" style="left:415px;top:171px;width:855px;height:1px;background:#ebe8d8;"></div>
<div class="a" style="left:415px;top:187px;width:855px;height:1px;background:#ebe8d8;"></div>
<div class="a" style="left:415px;top:203px;width:855px;height:1px;background:#ebe8d8;"></div>
<div class="a" style="left:415px;top:219px;width:855px;height:1px;background:#ebe8d8;"></div>
<div class="a" style="left:415px;top:235px;width:855px;height:1px;background:#ebe8d8;"></div>
<div class="a" style="left:415px;top:251px;width:855px;height:1px;background:#ebe8d8;"></div>
<div class="a" style="left:415px;top:267px;width:855px;height:1px;background:#ebe8d8;"></div>
<div class="a" style="left:415px;top:283px;width:855px;height:1px;background:#ebe8d8;"></div>
<div class="a" style="left:415px;top:299px;width:855px;height:1px;background:#ebe8d8;"></div>
<div class="a" style="left:415px;top:315px;width:855px;height:1px;background:#ebe8d8;"></div>
<div class="a" style="left:415px;top:331px;width:855px;height:1px;background:#ebe8d8;"></div>
<div class="a" style="left:415px;top:347px;width:855px;height:1px;background:#ebe8d8;"></div>
<div class="a" style="left:415px;top:363px;width:855px;height:1px;background:#ebe8d8;"></div>
<div class="a" style="left:415px;top:379px;width:855px;height:1px;background:#ebe8d8;"></div>
<div class="a" style="left:415px;top:395px;width:855px;height:1px;background:#ebe8d8;"></div>
<div class="a" style="left:415px;top:411px;width:855px;height:1px;background:#ebe8d8;"></div>
<div class="a" style="left:415px;top:427px;width:855px;height:1px;background:#ebe8d8;"></div>
<div class="a" style="left:415px;top:443px;width:855px;height:1px;background:#ebe8d8;"></div>
<div class="a" style="left:415px;top:459px;width:855px;height:1px;background:#ebe8d8;"></div>
<div class="a" style="left:415px;top:475px;width:855px;height:1px;background:#ebe8d8;"></div>
<div class="a" style="left:415px;top:491px;width:855px;height:1px;background:#ebe8d8;"></div>
<div class="a" style="left:415px;top:507px;width:855px;height:1px;background:#ebe8d8;"></div>
<div class="a" style="left:415px;top:523px;width:855px;height:1px;background:#ebe8d8;"></div>
<div class="a" style="left:415px;top:539px;width:855px;height:1px;background:#ebe8d8;"></div>
<div class="a" style="left:415px;top:555px;width:855px;height:1px;background:#ebe8d8;"></div>
<div class="a" style="left:415px;top:571px;width:855px;height:1px;background:#ebe8d8;"></div>
<div class="a" style="left:415px;top:587px;width:855px;height:1px;background:#ebe8d8;"></div>
<div class="a" style="left:415px;top:603px;width:855px;height:1px;background:#ebe8d8;"></div>
<div class="a" style="left:415px;top:619px;width:855px;height:1px;background:#ebe8d8;"></div>
<div class="a" style="left:415px;top:635px;width:855px;height:1px;background:#ebe8d8;"></div>
<div class="a" style="left:415px;top:651px;width:855px;height:1px;background:#ebe8d8;"></div>
<div class="a" style="left:415px;top:667px;width:855px;height:1px;background:#ebe8d8;"></div>
<div class="a" style="left:415px;top:683px;width:855px;height:1px;background:#ebe8d8;"></div>
<div class="a" style="left:415px;top:699px;width:855px;height:1px;background:#ebe8d8;"></div>
<div class="a" style="left:415px;top:715px;width:855px;height:1px;background:#ebe8d8;"></div>
<div class="a" style="left:415px;top:731px;width:855px;height:1px;background:#ebe8d8;"></div>
<div class="a" style="left:415px;top:747px;width:855px;height:1px;background:#ebe8d8;"></div>
<div class="a" style="left:415px;top:763px;width:855px;height:1px;background:#ebe8d8;"></div>
<div class="a" style="left:415px;top:779px;width:855px;height:1px;background:#ebe8d8;"></div>
<div class="a" style="left:453px;top:123px;width:1px;height:672px;background:#ebe8d8;"></div>
<div class="a" style="left:891px;top:123px;width:1px;height:672px;background:#ebe8d8;"></div>
<div class="a" style="left:1269px;top:123px;width:1px;height:672px;background:#ebe8d8;"></div>
<div class="t" style="left:445px;top:123px;letter-spacing:-0.12px;">1</div>
<svg style="left:455px;top:124px" width="16" height="15"><use href="#i-glob"/></svg>
<div class="t" style="left:474px;top:123px;letter-spacing:0.46px;">&lt;default&gt;</div>
<div class="a" style="left:895px;top:127px;width:37px;height:10px;background:#3c7ccc;"></div>
<div class="a" style="left:932px;top:127px;width:7px;height:10px;background:#84b4e4;"></div>
<div class="t" style="left:941px;top:125px;transform:scaleX(0.820);transform-origin:0 0;font-size:10px;letter-spacing:0.22px;color:#4a4a4a;-webkit-text-stroke:0;">125ms</div>
<div class="t" style="left:445px;top:139px;letter-spacing:-0.12px;">2</div>
<svg style="left:455px;top:140px" width="16" height="15"><use href="#i-css"/></svg>
<div class="t" style="left:474px;top:139px;letter-spacing:-0.11px;">standard2008.css</div>
<div class="a" style="left:959px;top:143px;width:6px;height:10px;background:#3c7ccc;"></div>
<div class="a" style="left:965px;top:143px;width:5px;height:10px;background:#84b4e4;"></div>
<div class="t" style="left:972px;top:141px;transform:scaleX(0.820);transform-origin:0 0;font-size:10px;letter-spacing:0.35px;color:#4a4a4a;-webkit-text-stroke:0;">31ms</div>
<div class="t" style="left:445px;top:155px;letter-spacing:-0.12px;">3</div>
<svg style="left:455px;top:156px" width="16" height="15"><use href="#i-css"/></svg>
<div class="t" style="left:474px;top:155px;letter-spacing:-0.10px;">navi_top2008.css</div>
<div class="a" style="left:970px;top:159px;width:11px;height:10px;background:#3c7ccc;"></div>
<div class="a" style="left:981px;top:159px;width:1px;height:10px;background:#84b4e4;"></div>
<div class="t" style="left:984px;top:157px;transform:scaleX(0.820);transform-origin:0 0;font-size:10px;letter-spacing:0.35px;color:#4a4a4a;-webkit-text-stroke:0;">32ms</div>
<div class="t" style="left:445px;top:171px;letter-spacing:-0.12px;">4</div>
<svg style="left:455px;top:172px" width="16" height="15"><use href="#i-css"/></svg>
<div class="t" style="left:474px;top:171px;letter-spacing:-0.11px;">standard2008.css</div>
<div class="a" style="left:981px;top:175px;width:11px;height:10px;background:#3c7ccc;"></div>
<div class="t" style="left:994px;top:173px;transform:scaleX(0.820);transform-origin:0 0;font-size:10px;letter-spacing:0.35px;color:#4a4a4a;-webkit-text-stroke:0;">31ms</div>
<div class="t" style="left:445px;top:187px;letter-spacing:-0.12px;">5</div>
<svg style="left:455px;top:188px" width="16" height="15"><use href="#i-css"/></svg>
<div class="t" style="left:474px;top:187px;letter-spacing:-0.15px;">drucken.css</div>
<div class="a" style="left:997px;top:191px;width:6px;height:10px;background:#3c7ccc;"></div>
<div class="t" style="left:1005px;top:189px;transform:scaleX(0.820);transform-origin:0 0;font-size:10px;letter-spacing:0.05px;color:#4a4a4a;-webkit-text-stroke:0;">16ms</div>
<div class="t" style="left:445px;top:203px;letter-spacing:-0.12px;">6</div>
<svg style="left:455px;top:203px" width="16" height="16"><use href="#i-doc"/></svg>
<div class="t" style="left:474px;top:203px;letter-spacing:0.08px;">external.js</div>
<div class="a" style="left:1008px;top:207px;width:6px;height:10px;background:#3c7ccc;"></div>
<div class="t" style="left:1016px;top:205px;transform:scaleX(0.820);transform-origin:0 0;font-size:10px;letter-spacing:0.05px;color:#4a4a4a;-webkit-text-stroke:0;">15ms</div>
<div class="t" style="left:445px;top:219px;letter-spacing:-0.12px;">7</div>
<svg style="left:455px;top:221px" width="16" height="14"><use href="#i-img"/></svg>
<div class="t" style="left:474px;top:219px;">background_navi_top.gif</div>
<div class="a" style="left:1019px;top:223px;width:6px;height:10px;background:#3c7ccc;"></div>
<div class="a" style="left:1025px;top:223px;width:5px;height:10px;background:#84b4e4;"></div>
<div class="t" style="left:1032px;top:221px;transform:scaleX(0.820);transform-origin:0 0;font-size:10px;letter-spacing:0.35px;color:#4a4a4a;-webkit-text-stroke:0;">31ms</div>
<div class="t" style="left:445px;top:235px;letter-spacing:-0.12px;">8</div>
<svg style="left:455px;top:237px" width="16" height="14"><use href="#i-img"/></svg>
<div class="t" style="left:474px;top:235px;letter-spacing:-0.06px;">midot.gif</div>
<div class="a" style="left:1019px;top:239px;width:6px;height:10px;background:#3c7ccc;"></div>
<div class="t" style="left:1027px;top:237px;transform:scaleX(0.820);transform-origin:0 0;font-size:10px;letter-spacing:0.05px;color:#4a4a4a;-webkit-text-stroke:0;">16ms</div>
<div class="t" style="left:445px;top:251px;letter-spacing:-0.12px;">9</div>
<svg style="left:455px;top:253px" width="16" height="14"><use href="#i-img"/></svg>
<div class="t" style="left:474px;top:251px;letter-spacing:-0.16px;">heise_online_logo.gif</div>
<div class="a" style="left:1025px;top:255px;width:6px;height:10px;background:#3c7ccc;"></div>
<div class="t" style="left:1033px;top:253px;transform:scaleX(0.820);transform-origin:0 0;font-size:10px;letter-spacing:0.05px;color:#4a4a4a;-webkit-text-stroke:0;">15ms</div>
<div class="t" style="left:439px;top:267px;letter-spacing:-0.12px;">10</div>
<svg style="left:455px;top:267px" width="16" height="16"><use href="#i-doc"/></svg>
<div class="t" style="left:474px;top:267px;letter-spacing:-0.14px;">login_ho.js</div>
<div class="a" style="left:1025px;top:271px;width:11px;height:10px;background:#3c7ccc;"></div>
<div class="t" style="left:1038px;top:269px;transform:scaleX(0.820);transform-origin:0 0;font-size:10px;letter-spacing:0.35px;color:#4a4a4a;-webkit-text-stroke:0;">31ms</div>
<div class="t" style="left:439px;top:283px;letter-spacing:0.29px;">11</div>
<svg style="left:455px;top:285px" width="16" height="14"><use href="#i-img"/></svg>
<div class="t" style="left:474px;top:283px;letter-spacing:-0.02px;">background_navigation.gif</div>
<div class="a" style="left:1041px;top:287px;width:11px;height:10px;background:#3c7ccc;"></div>
<div class="t" style="left:1054px;top:285px;transform:scaleX(0.820);transform-origin:0 0;font-size:10px;letter-spacing:0.35px;color:#4a4a4a;-webkit-text-stroke:0;">32ms</div>
<div class="t" style="left:439px;top:299px;letter-spacing:-0.12px;">12</div>
<svg style="left:455px;top:301px" width="16" height="14"><use href="#i-img"/></svg>
<div class="t" style="left:474px;top:299px;">background_mitte.gif</div>
<div class="a" style="left:1046px;top:303px;width:6px;height:10px;background:#3c7ccc;"></div>
<div class="a" style="left:1052px;top:303px;width:5px;height:10px;background:#84b4e4;"></div>
<div class="t" style="left:1059px;top:301px;transform:scaleX(0.820);transform-origin:0 0;font-size:10px;letter-spacing:0.35px;color:#4a4a4a;-webkit-text-stroke:0;">31ms</div>
<div class="t" style="left:439px;top:315px;letter-spacing:-0.12px;">13</div>
<svg style="left:455px;top:317px" width="16" height="14"><use href="#i-img"/></svg>
<div class="t" style="left:474px;top:315px;letter-spacing:0.46px;">&lt;default&gt;</div>
<div class="a" style="left:1046px;top:319px;width:11px;height:10px;background:#3c7ccc;"></div>
<div class="a" style="left:1057px;top:319px;width:11px;height:10px;background:#84b4e4;"></div>
<div class="t" style="left:1070px;top:317px;transform:scaleX(0.820);transform-origin:0 0;font-size:10px;letter-spacing:0.35px;color:#4a4a4a;-webkit-text-stroke:0;">63ms</div>
<div class="t" style="left:439px;top:331px;letter-spacing:-0.12px;">14</div>
<svg style="left:455px;top:333px" width="16" height="14"><use href="#i-img"/></svg>
<div class="t" style="left:474px;top:331px;letter-spacing:-0.05px;">background_mitte_links.gif</div>
<div class="a" style="left:1046px;top:335px;width:6px;height:10px;background:#3c7ccc;"></div>
<div class="a" style="left:1052px;top:335px;width:5px;height:10px;background:#84b4e4;"></div>
<div class="t" style="left:1059px;top:333px;transform:scaleX(0.820);transform-origin:0 0;font-size:10px;letter-spacing:0.35px;color:#4a4a4a;-webkit-text-stroke:0;">31ms</div>
<div class="t" style="left:439px;top:347px;letter-spacing:-0.12px;">15</div>
<svg style="left:455px;top:347px" width="16" height="16"><use href="#i-doc"/></svg>
<div class="t" style="left:474px;top:347px;letter-spacing:-0.09px;">1857783386@x41,x42,x43,x44?</div>
<div class="a" style="left:1063px;top:351px;width:10px;height:10px;background:#3c7ccc;"></div>
<div class="t" style="left:1075px;top:349px;transform:scaleX(0.820);transform-origin:0 0;font-size:10px;letter-spacing:0.35px;color:#4a4a4a;-webkit-text-stroke:0;">31ms</div>
<div class="t" style="left:439px;top:363px;letter-spacing:-0.12px;">16</div>
<svg style="left:455px;top:365px" width="16" height="14"><use href="#i-img"/></svg>
<div class="t" style="left:474px;top:363px;letter-spacing:0.04px;">graf639655.jpg</div>
<div class="a" style="left:1095px;top:367px;width:5px;height:10px;background:#3c7ccc;"></div>
<div class="a" style="left:1100px;top:367px;width:6px;height:10px;background:#84b4e4;"></div>
<div class="t" style="left:1108px;top:365px;transform:scaleX(0.820);transform-origin:0 0;font-size:10px;letter-spacing:0.35px;color:#4a4a4a;-webkit-text-stroke:0;">31ms</div>
<div class="t" style="left:439px;top:379px;letter-spacing:-0.12px;">17</div>
<svg style="left:455px;top:381px" width="16" height="14"><use href="#i-img"/></svg>
<div class="t" style="left:474px;top:379px;letter-spacing:-0.31px;">63316533393035613438626238376630?_RM_EMPTY_</div>
<div class="a" style="left:1095px;top:383px;width:11px;height:10px;background:#3c7ccc;"></div>
<div class="t" style="left:1108px;top:381px;transform:scaleX(0.820);transform-origin:0 0;font-size:10px;letter-spacing:0.35px;color:#4a4a4a;-webkit-text-stroke:0;">31ms</div>
<div class="t" style="left:439px;top:395px;letter-spacing:-0.12px;">18</div>
<svg style="left:455px;top:397px" width="16" height="14"><use href="#i-img"/></svg>
<div class="t" style="left:474px;top:395px;letter-spacing:-0.09px;">Trolltech_Logo_75x50.jpg</div>
<div class="a" style="left:1100px;top:399px;width:6px;height:10px;background:#3c7ccc;"></div>
<div class="a" style="left:1106px;top:399px;width:6px;height:10px;background:#84b4e4;"></div>
<div class="t" style="left:1114px;top:397px;transform:scaleX(0.820);transform-origin:0 0;font-size:10px;letter-spacing:0.35px;color:#4a4a4a;-webkit-text-stroke:0;">32ms</div>
<div class="t" style="left:439px;top:411px;letter-spacing:-0.12px;">19</div>
<svg style="left:455px;top:413px" width="16" height="14"><use href="#i-img"/></svg>
<div class="t" style="left:474px;top:411px;letter-spacing:-0.31px;">63316533393035613438626238376630?_RM_EMPTY_</div>
<div class="a" style="left:1106px;top:415px;width:11px;height:10px;background:#3c7ccc;"></div>
<div class="a" style="left:1117px;top:415px;width:6px;height:10px;background:#84b4e4;"></div>
<div class="t" style="left:1125px;top:413px;transform:scaleX(0.820);transform-origin:0 0;font-size:10px;letter-spacing:0.35px;color:#4a4a4a;-webkit-text-stroke:0;">47ms</div>
<div class="t" style="left:439px;top:427px;letter-spacing:-0.12px;">20</div>
<svg style="left:455px;top:429px" width="16" height="14"><use href="#i-img"/></svg>
<div class="t" style="left:474px;top:427px;letter-spacing:-0.31px;">63316533393035613438626238376630?_RM_EMPTY_</div>
<div class="a" style="left:1117px;top:431px;width:6px;height:10px;background:#3c7ccc;"></div>
<div class="t" style="left:1125px;top:429px;transform:scaleX(0.820);transform-origin:0 0;font-size:10px;letter-spacing:0.05px;color:#4a4a4a;-webkit-text-stroke:0;">16ms</div>
<div class="t" style="left:439px;top:443px;letter-spacing:-0.12px;">21</div>
<svg style="left:455px;top:445px" width="16" height="14"><use href="#i-img"/></svg>
<div class="t" style="left:474px;top:443px;letter-spacing:0.14px;">wwww.gif</div>
<div class="a" style="left:1122px;top:447px;width:6px;height:10px;background:#3c7ccc;"></div>
<div class="t" style="left:1130px;top:445px;transform:scaleX(0.820);transform-origin:0 0;font-size:10px;letter-spacing:0.05px;color:#4a4a4a;-webkit-text-stroke:0;">15ms</div>
<div class="t" style="left:439px;top:459px;letter-spacing:-0.12px;">22</div>
<svg style="left:455px;top:461px" width="16" height="14"><use href="#i-img"/></svg>
<div class="t" style="left:474px;top:459px;letter-spacing:-0.02px;">00on.gif</div>
<div class="a" style="left:1122px;top:463px;width:11px;height:10px;background:#3c7ccc;"></div>
<div class="t" style="left:1135px;top:461px;transform:scaleX(0.820);transform-origin:0 0;font-size:10px;letter-spacing:0.35px;color:#4a4a4a;-webkit-text-stroke:0;">31ms</div>
<div class="t" style="left:439px;top:475px;letter-spacing:-0.12px;">23</div>
<svg style="left:455px;top:477px" width="16" height="14"><use href="#i-img"/></svg>
<div class="t" style="left:474px;top:475px;letter-spacing:0.06px;">titel0908.gif</div>
<div class="a" style="left:1127px;top:479px;width:6px;height:10px;background:#3c7ccc;"></div>
<div class="a" style="left:1133px;top:479px;width:6px;height:10px;background:#84b4e4;"></div>
<div class="t" style="left:1141px;top:477px;transform:scaleX(0.820);transform-origin:0 0;font-size:10px;letter-spacing:0.35px;color:#4a4a4a;-webkit-text-stroke:0;">32ms</div>
<div class="t" style="left:439px;top:491px;letter-spacing:-0.12px;">24</div>
<svg style="left:455px;top:493px" width="16" height="14"><use href="#i-img"/></svg>
<div class="t" style="left:474px;top:491px;letter-spacing:-0.12px;">2</div>
<div class="a" style="left:1133px;top:495px;width:17px;height:10px;background:#3c7ccc;"></div>
<div class="t" style="left:1152px;top:493px;transform:scaleX(0.820);transform-origin:0 0;font-size:10px;letter-spacing:0.35px;color:#4a4a4a;-webkit-text-stroke:0;">47ms</div>
<div class="t" style="left:439px;top:507px;letter-spacing:-0.12px;">25</div>
<svg style="left:455px;top:509px" width="16" height="14"><use href="#i-img"/></svg>
<div class="t" style="left:474px;top:507px;letter-spacing:-0.12px;">0</div>
<div class="a" style="left:1139px;top:511px;width:10px;height:10px;background:#3c7ccc;"></div>
<div class="a" style="left:1149px;top:511px;width:7px;height:10px;background:#84b4e4;"></div>
<div class="t" style="left:1158px;top:509px;transform:scaleX(0.820);transform-origin:0 0;font-size:10px;letter-spacing:0.35px;color:#4a4a4a;-webkit-text-stroke:0;">47ms</div>
<div class="t" style="left:439px;top:523px;letter-spacing:-0.12px;">26</div>
<svg style="left:455px;top:525px" width="16" height="14"><use href="#i-img"/></svg>
<div class="t" style="left:474px;top:523px;letter-spacing:-0.12px;">0</div>
<div class="a" style="left:1144px;top:527px;width:22px;height:10px;background:#3c7ccc;"></div>
<div class="t" style="left:1168px;top:525px;transform:scaleX(0.820);transform-origin:0 0;font-size:10px;letter-spacing:0.35px;color:#4a4a4a;-webkit-text-stroke:0;">63ms</div>
<div class="t" style="left:439px;top:539px;letter-spacing:-0.12px;">27</div>
<svg style="left:455px;top:541px" width="16" height="14"><use href="#i-img"/></svg>
<div class="t" style="left:474px;top:539px;letter-spacing:-0.05px;">ifa_logo_ho2008.gif</div>
<div class="a" style="left:1144px;top:543px;width:6px;height:10px;background:#3c7ccc;"></div>
<div class="t" style="left:1152px;top:541px;transform:scaleX(0.820);transform-origin:0 0;font-size:10px;letter-spacing:0.05px;color:#4a4a4a;-webkit-text-stroke:0;">16ms</div>
<div class="t" style="left:439px;top:555px;letter-spacing:-0.12px;">28</div>
<svg style="left:455px;top:557px" width="16" height="14"><use href="#i-img"/></svg>
<div class="t" style="left:474px;top:555px;letter-spacing:-0.04px;">background_onlinemarkt.gif</div>
<div class="a" style="left:1155px;top:559px;width:11px;height:10px;background:#3c7ccc;"></div>
<div class="t" style="left:1168px;top:557px;transform:scaleX(0.820);transform-origin:0 0;font-size:10px;letter-spacing:0.35px;color:#4a4a4a;-webkit-text-stroke:0;">31ms</div>
<div class="t" style="left:439px;top:571px;letter-spacing:-0.12px;">29</div>
<svg style="left:455px;top:573px" width="16" height="14"><use href="#i-img"/></svg>
<div class="t" style="left:474px;top:571px;letter-spacing:-0.14px;">heise-pptminimzer.gif</div>
<div class="a" style="left:1160px;top:575px;width:6px;height:10px;background:#3c7ccc;"></div>
<div class="a" style="left:1166px;top:575px;width:5px;height:10px;background:#84b4e4;"></div>
<div class="t" style="left:1173px;top:573px;transform:scaleX(0.820);transform-origin:0 0;font-size:10px;letter-spacing:0.35px;color:#4a4a4a;-webkit-text-stroke:0;">31ms</div>
<div class="t" style="left:439px;top:587px;letter-spacing:-0.12px;">30</div>
<svg style="left:455px;top:589px" width="16" height="14"><use href="#i-img"/></svg>
<div class="t" style="left:474px;top:587px;letter-spacing:0.46px;">&lt;default&gt;</div>
<div class="a" style="left:1160px;top:591px;width:11px;height:10px;background:#3c7ccc;"></div>
<div class="a" style="left:1171px;top:591px;width:6px;height:10px;background:#84b4e4;"></div>
<div class="t" style="left:1179px;top:589px;transform:scaleX(0.820);transform-origin:0 0;font-size:10px;letter-spacing:0.35px;color:#4a4a4a;-webkit-text-stroke:0;">47ms</div>
<div class="t" style="left:439px;top:603px;letter-spacing:-0.12px;">31</div>
<svg style="left:455px;top:605px" width="16" height="14"><use href="#i-img"/></svg>
<div class="t" style="left:474px;top:603px;letter-spacing:-0.31px;">63316533393035613438626238376630?_RM_EMPTY_</div>
<div class="a" style="left:1176px;top:607px;width:11px;height:10px;background:#3c7ccc;"></div>
<div class="t" style="left:1189px;top:605px;transform:scaleX(0.820);transform-origin:0 0;font-size:10px;letter-spacing:0.35px;color:#4a4a4a;-webkit-text-stroke:0;">31ms</div>
<div class="t" style="left:439px;top:619px;letter-spacing:-0.12px;">32</div>
<svg style="left:455px;top:621px" width="16" height="14"><use href="#i-img"/></svg>
<div class="t" style="left:474px;top:619px;letter-spacing:0.02px;">fotoespresso.gif</div>
<div class="a" style="left:1182px;top:623px;width:6px;height:10px;background:#3c7ccc;"></div>
<div class="t" style="left:1190px;top:621px;transform:scaleX(0.820);transform-origin:0 0;font-size:10px;letter-spacing:0.05px;color:#4a4a4a;-webkit-text-stroke:0;">15ms</div>
<div class="t" style="left:439px;top:635px;letter-spacing:-0.12px;">33</div>
<svg style="left:455px;top:637px" width="16" height="14"><use href="#i-img"/></svg>
<div class="t" style="left:474px;top:635px;letter-spacing:-0.31px;">63316533393035613438626238376630?_RM_EMPTY_</div>
<div class="a" style="left:1182px;top:639px;width:5px;height:10px;background:#3c7ccc;"></div>
<div class="a" style="left:1187px;top:639px;width:6px;height:10px;background:#84b4e4;"></div>
<div class="t" style="left:1195px;top:637px;transform:scaleX(0.820);transform-origin:0 0;font-size:10px;letter-spacing:0.35px;color:#4a4a4a;-webkit-text-stroke:0;">31ms</div>
<div class="t" style="left:439px;top:651px;letter-spacing:-0.12px;">34</div>
<svg style="left:455px;top:653px" width="16" height="14"><use href="#i-img"/></svg>
<div class="t" style="left:474px;top:651px;letter-spacing:-0.06px;">11545_css_probl_cont.gif</div>
<div class="a" style="left:1182px;top:655px;width:11px;height:10px;background:#3c7ccc;"></div>
<div class="t" style="left:1195px;top:653px;transform:scaleX(0.820);transform-origin:0 0;font-size:10px;letter-spacing:0.35px;color:#4a4a4a;-webkit-text-stroke:0;">31ms</div>
<div class="t" style="left:439px;top:667px;letter-spacing:-0.12px;">35</div>
<svg style="left:455px;top:669px" width="16" height="14"><use href="#i-img"/></svg>
<div class="t" style="left:474px;top:667px;letter-spacing:-0.31px;">63316533393035613438626238376630?_RM_EMPTY_</div>
<div class="a" style="left:1198px;top:671px;width:6px;height:10px;background:#3c7ccc;"></div>
<div class="t" style="left:1206px;top:669px;transform:scaleX(0.820);transform-origin:0 0;font-size:10px;letter-spacing:0.05px;color:#4a4a4a;-webkit-text-stroke:0;">15ms</div>
<div class="t" style="left:439px;top:683px;letter-spacing:-0.12px;">36</div>
<svg style="left:455px;top:685px" width="16" height="14"><use href="#i-img"/></svg>
<div class="t" style="left:474px;top:683px;letter-spacing:-0.31px;">63316533393035613438626238376630?_RM_EMPTY_</div>
<div class="a" style="left:1198px;top:687px;width:5px;height:10px;background:#3c7ccc;"></div>
<div class="a" style="left:1203px;top:687px;width:6px;height:10px;background:#84b4e4;"></div>
<div class="t" style="left:1211px;top:685px;transform:scaleX(0.820);transform-origin:0 0;font-size:10px;letter-spacing:0.35px;color:#4a4a4a;-webkit-text-stroke:0;">31ms</div>
<div class="t" style="left:439px;top:699px;letter-spacing:-0.12px;">37</div>
<svg style="left:455px;top:701px" width="16" height="14"><use href="#i-img"/></svg>
<div class="t" style="left:474px;top:699px;letter-spacing:-0.04px;">137_200.gif</div>
<div class="a" style="left:1203px;top:703px;width:6px;height:10px;background:#3c7ccc;"></div>
<div class="a" style="left:1209px;top:703px;width:5px;height:10px;background:#84b4e4;"></div>
<div class="t" style="left:1216px;top:701px;transform:scaleX(0.820);transform-origin:0 0;font-size:10px;letter-spacing:0.35px;color:#4a4a4a;-webkit-text-stroke:0;">31ms</div>
<div class="t" style="left:439px;top:715px;letter-spacing:-0.12px;">38</div>
<svg style="left:455px;top:717px" width="16" height="14"><use href="#i-img"/></svg>
<div class="t" style="left:474px;top:715px;letter-spacing:0.46px;">&lt;default&gt;</div>
<div class="a" style="left:1203px;top:719px;width:17px;height:10px;background:#3c7ccc;"></div>
<div class="t" style="left:1222px;top:717px;transform:scaleX(0.820);transform-origin:0 0;font-size:10px;letter-spacing:0.35px;color:#4a4a4a;-webkit-text-stroke:0;">47ms</div>
<div class="t" style="left:439px;top:731px;letter-spacing:-0.12px;">39</div>
<svg style="left:455px;top:731px" width="16" height="16"><use href="#i-ref"/></svg>
<div class="t" style="left:474px;top:731px;">?r=&amp;d=42332.754460390366</div>
<div class="a" style="left:1209px;top:735px;width:11px;height:10px;background:#3c7ccc;"></div>
<div class="a" style="left:1220px;top:735px;width:6px;height:10px;background:#84b4e4;"></div>
<div class="t" style="left:1228px;top:733px;transform:scaleX(0.820);transform-origin:0 0;font-size:10px;letter-spacing:0.35px;color:#4a4a4a;-webkit-text-stroke:0;">47ms</div>
<div class="t" style="left:439px;top:747px;letter-spacing:-0.12px;">40</div>
<svg style="left:455px;top:749px" width="16" height="14"><use href="#i-img"/></svg>
<div class="t" style="left:474px;top:747px;letter-spacing:0.01px;">background_weitere.gif</div>
<div class="a" style="left:1214px;top:751px;width:17px;height:10px;background:#3c7ccc;"></div>
<div class="t" style="left:1233px;top:749px;transform:scaleX(0.820);transform-origin:0 0;font-size:10px;letter-spacing:0.35px;color:#4a4a4a;-webkit-text-stroke:0;">47ms</div>
<div class="t" style="left:439px;top:763px;letter-spacing:-0.12px;">41</div>
<svg style="left:455px;top:765px" width="16" height="14"><use href="#i-img"/></svg>
<div class="t" style="left:474px;top:763px;">blank.gif</div>
<div class="a" style="left:1225px;top:767px;width:6px;height:10px;background:#3c7ccc;"></div>
<div class="t" style="left:1233px;top:765px;transform:scaleX(0.820);transform-origin:0 0;font-size:10px;letter-spacing:0.05px;color:#4a4a4a;-webkit-text-stroke:0;">15ms</div>
<div class="t" style="left:455px;top:779px;">Total Duration</div>
<div class="t" style="left:892px;top:781px;transform:scaleX(0.850);transform-origin:0 0;font-size:10px;letter-spacing:0.59px;-webkit-text-stroke:0.15px #000;">968ms</div>
<div class="t" style="left:0px;top:980px;font-size:10px;letter-spacing:-0.23px;-webkit-text-stroke:0.1px #000;">GET http://www.heise.de/favicon.ico</div>
<div class="t" style="left:1143px;top:980px;font-size:10px;letter-spacing:-0.51px;-webkit-text-stroke:0.1px #000;">Recording</div>
<div class="t" style="left:1204px;top:980px;font-size:10px;letter-spacing:-0.44px;-webkit-text-stroke:0.1px #000;">12MB of 254MB</div>
</body></html>
